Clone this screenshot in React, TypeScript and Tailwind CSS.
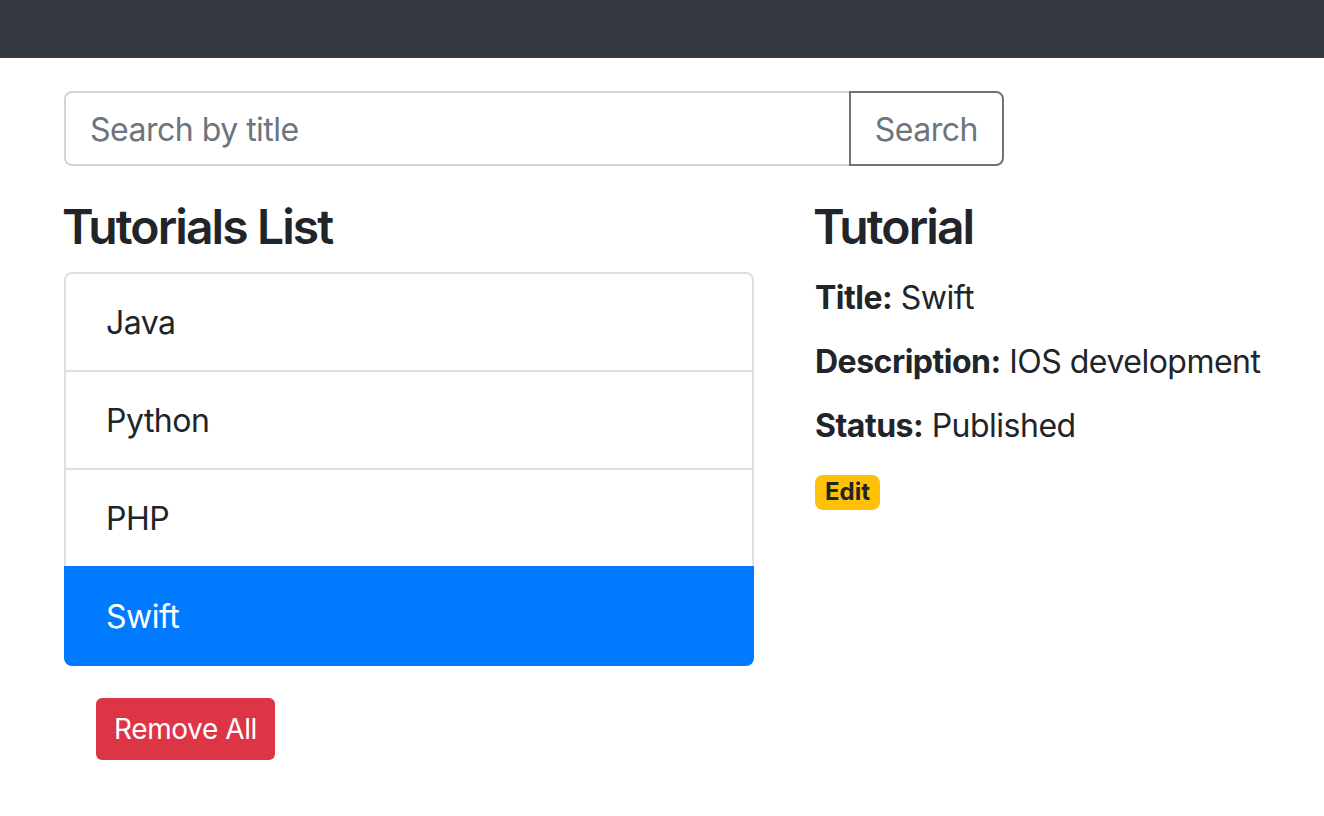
import React from "react";

const items = ["Java", "Python", "PHP", "Swift"];

export default function App() {
  return (
    <div
      className="min-h-[816px] w-[1324px] overflow-hidden bg-white text-[#212529]"
      style={{ fontFamily: "Inter, 'Noto Sans', sans-serif" }}
    >
      <nav className="h-[58px] bg-[#343a40]" />
      <div className="pl-[64px] pt-[33px]">
        <div className="flex h-[75px] w-[940px] tracking-[-0.5px]">
          <div className="flex flex-1 items-center rounded-l-[8px] border-2 border-r-0 border-[#ced4da] pl-[24px] pt-[2px] text-[32px] text-[#6c757d]">
            Search by title
          </div>
          <button className="flex items-center rounded-r-[8px] border-2 border-[#6c757d] px-[24px] pt-[2px] text-[32px] text-[#6c757d]">
            Search
          </button>
        </div>
        <div className="mt-[32px] flex gap-[61px]">
          <div className="w-[690px] shrink-0">
            <h4 className="mb-[16px] -ml-[2px] text-[48px] font-semibold leading-[57.6px] tracking-[-1.9px]">
              Tutorials List
            </h4>
            <ul>
              {items.map((it, i) => {
                const active = it === "Swift";
                return (
                  <li
                    key={it}
                    className={
                      "relative flex h-[100px] items-center border-2 px-[40px] pt-[3px] text-[32px] tracking-[-0.5px] " +
                      (i > 0 ? "-mt-[2px] " : "rounded-t-[8px] ") +
                      (i === items.length - 1 ? "rounded-b-[8px] " : "") +
                      (active ? "z-10 border-[#007bff] bg-[#007bff] text-white" : "border-[#dfdfdf] bg-white")
                    }
                  >
                    {it}
                  </li>
                );
              })}
            </ul>
            <button className="m-[32px] h-[62px] rounded-[6px] bg-[#dc3545] px-[18px] pt-[1px] text-[28px] tracking-[-0.4px] text-white">
              Remove All
            </button>
          </div>
          <div className="shrink-0">
            <h4 className="mb-[16px] -ml-[2px] text-[48px] font-semibold leading-[57.6px] tracking-[-1.9px]">
              Tutorial
            </h4>
            <div className="pt-[2px] text-[32px] leading-[48px] tracking-[-0.5px]">
              <div className="mb-[16px]">
                <strong className="font-bold">Title:</strong> Swift
              </div>
              <div className="mb-[16px]">
                <strong className="font-bold">Description:</strong> IOS development
              </div>
              <div className="mb-[16px]">
                <strong className="font-bold">Status:</strong> Published
              </div>
            </div>
            <div className="mt-[9px] inline-flex h-[35px] items-center rounded-[8px] bg-[#ffc107] px-[10px] text-[24px] font-bold leading-none text-[#212529]">
              Edit
            </div>
          </div>
        </div>
      </div>
    </div>
  );
}
